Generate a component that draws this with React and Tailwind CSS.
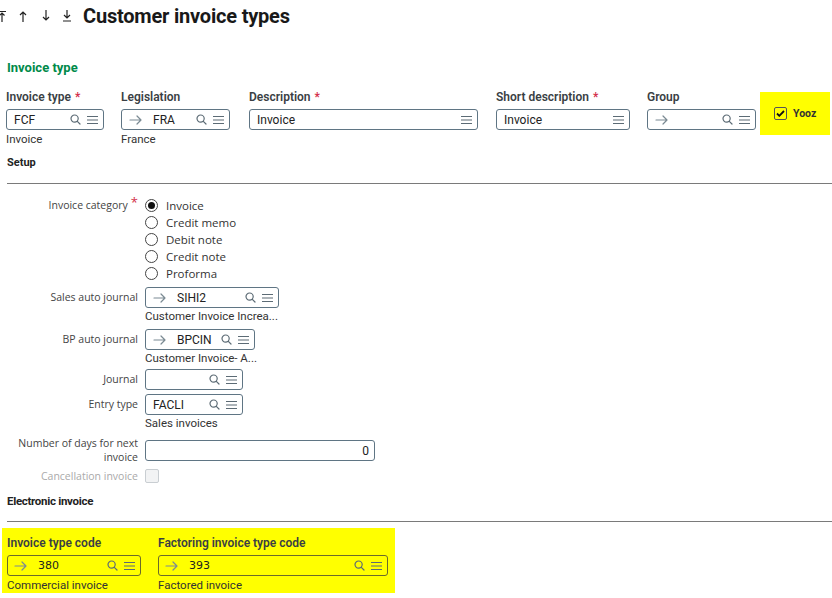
import React from "react";

const SANS = { fontFamily: "Roboto, 'Liberation Sans', sans-serif" };
const OPEN = { fontFamily: "'Open Sans', 'Liberation Sans', sans-serif" };

function Arrow({ className = "" }) {
  return (
    <svg width="13" height="10" viewBox="0 0 13 10" className={className} fill="none" stroke="currentColor" strokeWidth="1.2" strokeLinecap="round" strokeLinejoin="round">
      <path d="M1 5h11M8 1l4 4-4 4" />
    </svg>
  );
}

function Search() {
  return (
    <svg width="11" height="11" viewBox="0 0 11 11" fill="none" stroke="currentColor" strokeWidth="1.2" strokeLinecap="round">
      <circle cx="4.6" cy="4.6" r="3.6" />
      <path d="M7.3 7.3L10 10" />
    </svg>
  );
}

function Menu() {
  return (
    <svg width="11" height="10" viewBox="0 0 11 10" fill="none" stroke="currentColor" strokeWidth="1.1">
      <path d="M0 1.5h11M0 5h11M0 8.5h11" />
    </svg>
  );
}

function Input({ width, value, arrow, search = true, menu = true, align = "left", valueStyle, className = "", pl = "pl-[7px]" }) {
  return (
    <div
      className={`flex items-center h-[21px] border border-[#5f7584] rounded-[3px] bg-transparent ${pl} pr-[5px] ${className}`}
      style={{ width }}
    >
      {arrow && <Arrow className="text-[#7b8a93] mr-[11px] shrink-0" />}
      <span className={`flex-1 text-[12px] text-[#222] leading-none ${align === "right" ? "text-right" : ""}`} style={valueStyle || SANS}>
        {value}
      </span>
      {search && (
        <span className="text-[#5c6b75] ml-[4px] flex items-center">
          <Search />
        </span>
      )}
      {menu && (
        <span className="text-[#5c6b75] ml-[6px] flex items-center">
          <Menu />
        </span>
      )}
    </div>
  );
}

function Field({ label, required, children, sub, className = "" }) {
  return (
    <div className={`flex flex-col ${className}`} style={SANS}>
      <div className="text-[12px] font-semibold text-[#3a3f44] h-[16px] leading-[16px] mb-[4px]">
        {label}
        {required && <span className="text-[#d3304a] ml-[4px]">*</span>}
      </div>
      {children}
      <div className="text-[11.5px] text-[#333] h-[16px] leading-[16px] mt-[1px]">{sub}</div>
    </div>
  );
}

function Radio({ checked, label }) {
  return (
    <div className="flex items-center h-[17px]">
      <span className="w-[13px] h-[13px] rounded-full border border-[#444] flex items-center justify-center mr-[8px]">
        {checked && <span className="w-[7px] h-[7px] rounded-full bg-[#111]" />}
      </span>
      <span className="text-[11.5px] text-[#333]" style={OPEN}>{label}</span>
    </div>
  );
}

function SetupLabel({ children, className = "" }) {
  return (
    <div className={`text-[10.5px] text-[#444] text-right ${className}`} style={OPEN}>
      {children}
    </div>
  );
}

export default function App() {
  return (
    <div className="w-[832px] h-[598px] bg-white overflow-hidden relative" style={SANS}>
      {/* Header */}
      <div className="flex items-center h-[30px] pt-[2px]">
        <div className="flex items-center text-[#222] ml-[-2px]">
          <svg width="8" height="12" viewBox="0 0 8 12" fill="none" stroke="currentColor" strokeWidth="1.2">
            <path d="M0 1.5h8M4 3v9M1.5 5.5L4 3l2.5 2.5" />
          </svg>
          <svg width="10" height="12" viewBox="0 0 10 12" fill="none" stroke="currentColor" strokeWidth="1.2" className="ml-[12px]">
            <path d="M5 2v10M2 5l3-3 3 3" />
          </svg>
          <svg width="10" height="12" viewBox="0 0 10 12" fill="none" stroke="currentColor" strokeWidth="1.2" className="ml-[13px]">
            <path d="M5 0v10M2 7l3 3 3-3" />
          </svg>
          <svg width="10" height="12" viewBox="0 0 10 12" fill="none" stroke="currentColor" strokeWidth="1.2" className="ml-[11px]">
            <path d="M5 0v8M2 5l3 3 3-3M1 11h8" />
          </svg>
        </div>
        <div className="ml-[11px] text-[20px] font-bold text-[#191919] tracking-[-0.2px]" style={SANS}>
          Customer invoice types
        </div>
      </div>

      {/* Invoice type section */}
      <div className="px-[7px] mt-[29px]">
        <div className="text-[13px] font-bold text-[#008a4a] h-[18px] leading-[18px]">Invoice type</div>
      </div>

      <div className="flex items-start pl-[6px] mt-[4px]">
        <Field label="Invoice type" required sub="Invoice" className="w-[98px] mt-[8px]">
          <Input width={98} value="FCF" />
        </Field>
        <Field label="Legislation" sub="France" className="ml-[17px] w-[109px] mt-[8px]">
          <Input width={109} value="FRA" arrow />
        </Field>
        <Field label="Description" required sub="" className="ml-[19px] w-[229px] mt-[8px]">
          <Input width={229} value="Invoice" search={false} />
        </Field>
        <Field label="Short description" required sub="" className="ml-[18px] w-[134px] mt-[8px]">
          <Input width={134} value="Invoice" search={false} />
        </Field>
        <Field label="Group" sub="" className="ml-[17px] w-[109px] mt-[8px]">
          <Input width={109} value="" arrow />
        </Field>
        <div className="ml-[4px] w-[70px] h-[43px] bg-[#ffff00] flex items-center pl-[14px] mt-[11px]">
          <span className="w-[13px] h-[13px] border border-[#555] rounded-[2px] flex items-center justify-center bg-[#ffff00]">
            <svg width="9" height="7" viewBox="0 0 9 7" fill="none" stroke="#111" strokeWidth="1.8">
              <path d="M1 3.5l2.3 2.3L8 1" />
            </svg>
          </span>
          <span className="ml-[6px] text-[10.5px] font-bold text-[#333]">Yooz</span>
        </div>
      </div>

      <div className="px-[7px] mt-[8px]">
        <div className="text-[11px] font-bold text-[#222] h-[16px] leading-[16px]">Setup</div>
      </div>
      <div className="ml-[7px] mt-[12px] h-px bg-[#7a7a7a]" />

      {/* Setup */}
      <div className="grid grid-cols-[138px_auto] gap-x-[7px] mt-[13px] items-start">
        <SetupLabel className="pt-[1px]">
          Invoice category<span className="text-[#d3304a] text-[13px] leading-none ml-[3px] relative top-[-2px]">*</span>
        </SetupLabel>
        <div className="flex flex-col">
          <Radio checked label="Invoice" />
          <Radio label="Credit memo" />
          <Radio label="Debit note" />
          <Radio label="Credit note" />
          <Radio label="Proforma" />
        </div>

        <SetupLabel className="mt-[5px] h-[21px] leading-[21px]">Sales auto journal</SetupLabel>
        <div className="mt-[5px] flex flex-col">
          <Input width={134} value="SIHI2" arrow />
          <div className="text-[11.5px] text-[#333] h-[15px] leading-[15px] mt-[1px]">Customer Invoice Increa...</div>
        </div>

        <SetupLabel className="mt-[5px] h-[21px] leading-[21px]">BP auto journal</SetupLabel>
        <div className="mt-[5px] flex flex-col">
          <Input width={110} value="BPCIN" arrow />
          <div className="text-[11.5px] text-[#333] h-[15px] leading-[15px] mt-[1px]">Customer Invoice- A...</div>
        </div>

        <SetupLabel className="mt-[3px] h-[21px] leading-[21px]">Journal</SetupLabel>
        <div className="mt-[3px]">
          <Input width={98} value="" />
        </div>

        <SetupLabel className="mt-[4px] h-[21px] leading-[21px]">Entry type</SetupLabel>
        <div className="mt-[4px] flex flex-col">
          <Input width={98} value="FACLI" />
          <div className="text-[11.5px] text-[#333] h-[15px] leading-[15px] mt-[1px]">Sales invoices</div>
        </div>

        <SetupLabel className="mt-[5px] leading-[14px]">
          Number of days for next
          <br />
          invoice
        </SetupLabel>
        <div className="mt-[9px]">
          <Input width={230} value="0" search={false} menu={false} align="right" />
        </div>

        <SetupLabel className="mt-[5px] h-[14px] leading-[14px]">
          <span className="text-[#aaa]">Cancellation invoice</span>
        </SetupLabel>
        <div className="mt-[5px]">
          <span className="block w-[14px] h-[14px] border border-[#c9ced2] bg-[#f2f3f4] rounded-[2px]" />
        </div>
      </div>

      <div className="px-[7px] mt-[10px]">
        <div className="text-[11.5px] font-bold text-[#222] h-[16px] leading-[16px] tracking-[-0.3px]">Electronic invoice</div>
      </div>
      <div className="ml-[7px] mt-[12px] h-px bg-[#7a7a7a]" />

      {/* Electronic invoice */}
      <div className="ml-[2px] mt-[6px] w-[393px] h-[65px] bg-[#ffff00] flex items-start pl-[5px] pt-[7px]">
        <Field label="Invoice type code" sub="Commercial invoice" className="w-[134px]">
          <Input width={134} value="380" arrow pl="pl-[6px]" valueStyle={{ fontFamily: "'DejaVu Sans', sans-serif", fontSize: 11 }} className="border-[#6b6b2a]" />
        </Field>
        <Field label="Factoring invoice type code" sub="Factored invoice" className="ml-[17px] w-[230px]">
          <Input width={230} value="393" arrow pl="pl-[6px]" valueStyle={{ fontFamily: "'DejaVu Sans', sans-serif", fontSize: 11 }} className="border-[#6b6b2a]" />
        </Field>
      </div>
    </div>
  );
}
